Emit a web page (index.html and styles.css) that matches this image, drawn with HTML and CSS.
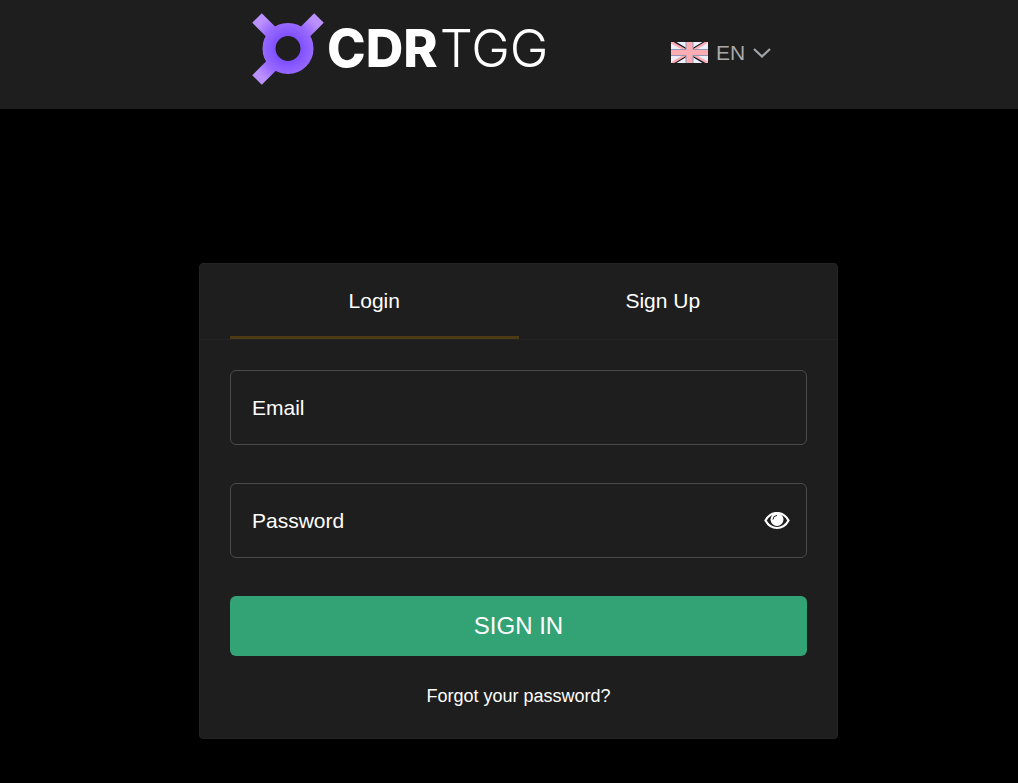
FILE: index.html
```
<!DOCTYPE html>
<html lang="en">

<head>
    <meta charset="utf-8">
    <meta name="viewport" content="width=device-width, initial-scale=1">
    <title>CDRTGG - Login</title>
    <link rel="stylesheet" href="styles.css">
</head>

<body>
    <header class="header">
        <div class="header-inner">
            <a class="logo" href="#">
                <svg class="logo-icon" viewBox="0 0 72 72" aria-hidden="true">
                    <defs>
                        <radialGradient id="logo-fill" gradientUnits="userSpaceOnUse" cx="36" cy="36" r="44">
                            <stop offset="0.25" stop-color="#7c4dff"/>
                            <stop offset="0.6" stop-color="#9a6bff"/>
                            <stop offset="0.85" stop-color="#bb90ff"/>
                        </radialGradient>
                    </defs>
                    <g fill="none" stroke="url(#logo-fill)">
                        <path stroke-width="13.5" d="M5 5l16 16M67 5L51 21M5 67l16-16"/>
                        <circle stroke-width="13" cx="36" cy="35.500" r="19"/>
                    </g>
                </svg>
                <span class="logo-text"><b>CDR</b>TGG</span>
            </a>
            <div class="lang">
                <svg class="flag" viewBox="0 0 37 21" aria-hidden="true">
                    <path fill="#eef0ff" d="M0 0h37v21H0z"/>
                    <path stroke="#11111c" stroke-width="2.500" d="M3 0l15 9M34 0L19 9M3 21l15-9M34 21l-15-9"/>
                    <path stroke="#ffadb2" stroke-width="2.500" d="M0 0l16 9M36 0L21 9M37 21l-16-9M1 21l15-9"/>
                    <path stroke="#9497b5" stroke-width="8" d="M18.500 0v21"/>
                    <path stroke="#9497b5" stroke-width="7" d="M0 10.500h37"/>
                    <path stroke="#ffadb2" stroke-width="6" d="M18.500 0v21"/>
                    <path stroke="#ffadb2" stroke-width="5" d="M0 10.500h37"/>
                </svg>
                <select class="lang-select" aria-label="Language">
                    <option>EN</option>
                </select>
                <svg class="chevron" viewBox="0 0 18 10" aria-hidden="true">
                    <path fill="none" stroke="#a0a5aa" stroke-width="2.2" d="M1 1l8 7.500L17 1"/>
                </svg>
            </div>
        </div>
    </header>

    <main class="main">
        <section class="card">
            <nav class="tabs">
                <a class="tab active" href="#login">Login</a>
                <a class="tab" href="#signup">Sign Up</a>
            </nav>
            <form class="form">
                <div class="field">
                    <input class="input" type="email" placeholder="Email" aria-label="Email">
                </div>
                <div class="field">
                    <input class="input" type="password" placeholder="Password" aria-label="Password">
                    <button class="btn-eye" type="button" aria-label="Show password">
                        <svg viewBox="0 0 26 18" aria-hidden="true">
                            <path fill="none" stroke="#fff" stroke-width="2.2" d="M1.500 8.500C7-1.500 19-1.500 24.500 8.500 19 18.500 7 18.500 1.500 8.500z"/>
                            <circle fill="#fff" cx="13" cy="7.500" r="6.500"/>
                            <path fill="none" stroke="#1e1e1e" stroke-width="1" d="M9 7.500Q9 3.500 13 3.500"/>
                        </svg>
                    </button>
                </div>
                <button class="btn-submit" type="submit">SIGN IN</button>
                <a class="forgot" href="#forgot">Forgot your password?</a>
            </form>
        </section>
    </main>
</body>

</html>
```
FILE: styles.css
```
* {
    box-sizing: border-box;
}

body {
    margin: 0;
    color: #fff;
    background: #000;
    font-family: "Liberation Sans", Arial, sans-serif;
    font-size: 21px;
    line-height: 24px;
}

a {
    color: inherit;
    text-decoration: none;
}

button,
input,
select {
    font: inherit;
    color: inherit;
}

.header {
    padding: 13px 16px 24px;
    background: #1e1e1e;
}

.header-inner {
    display: flex;
    align-items: center;
    justify-content: space-between;
    max-width: 524px;
    margin: 0 auto;
}

.logo {
    display: flex;
    align-items: center;
    gap: 3px;
    padding-left: 5px;
}

.logo-icon {
    width: 72px;
    height: 72px;
}

.logo-text {
    font-family: Inter, sans-serif;
    font-size: 52px;
    font-weight: 300;
    line-height: 64px;
}

.logo-text b {
    margin-right: 2px;
    font-weight: 800;
}

.lang {
    position: relative;
    display: flex;
    align-items: center;
    gap: 8px;
    padding-top: 7px;
    color: #a9a9a9;
}

.flag {
    width: 37px;
    height: 21px;
}

.lang-select {
    width: 55px;
    padding: 0;
    border: 0;
    background: none;
    appearance: none;
    cursor: pointer;
}

.chevron {
    position: absolute;
    right: 0;
    width: 18px;
    height: 10px;
    pointer-events: none;
}

.main {
    padding: 154px 16px 44px 35px;
}

.card {
    max-width: 639px;
    margin: 0 auto;
    border: 1px solid #242424;
    border-radius: 4px;
    background: #1e1e1e;
}

.tabs {
    display: flex;
    padding: 0 30px;
    border-bottom: 1px solid #242424;
}

.tab {
    flex: 1;
    padding: 25px 0 23px;
    border-bottom: 3px solid transparent;
    text-align: center;
}

.tab.active {
    border-color: #4b3a14;
}

.form {
    padding: 30px;
}

.field {
    position: relative;
    margin-bottom: 38px;
}

.input {
    display: block;
    width: 100%;
    height: 75px;
    padding: 0 21px;
    border: 1px solid #4a4a4a;
    border-radius: 6px;
    background: none;
}

.input::placeholder {
    color: #fff;
    opacity: 1;
}

.btn-eye {
    position: absolute;
    top: 0;
    right: 17px;
    display: flex;
    align-items: center;
    height: 100%;
    padding: 0;
    border: 0;
    background: none;
    cursor: pointer;
}

.btn-eye svg {
    width: 26px;
    height: 18px;
}

.btn-submit {
    display: block;
    width: 100%;
    padding: 16px;
    border: 0;
    border-radius: 6px;
    background: #33a275;
    font-size: 24px;
    line-height: 28px;
    cursor: pointer;
}

.forgot {
    display: block;
    margin-top: 28px;
    font-size: 18px;
    text-align: center;
}
```
